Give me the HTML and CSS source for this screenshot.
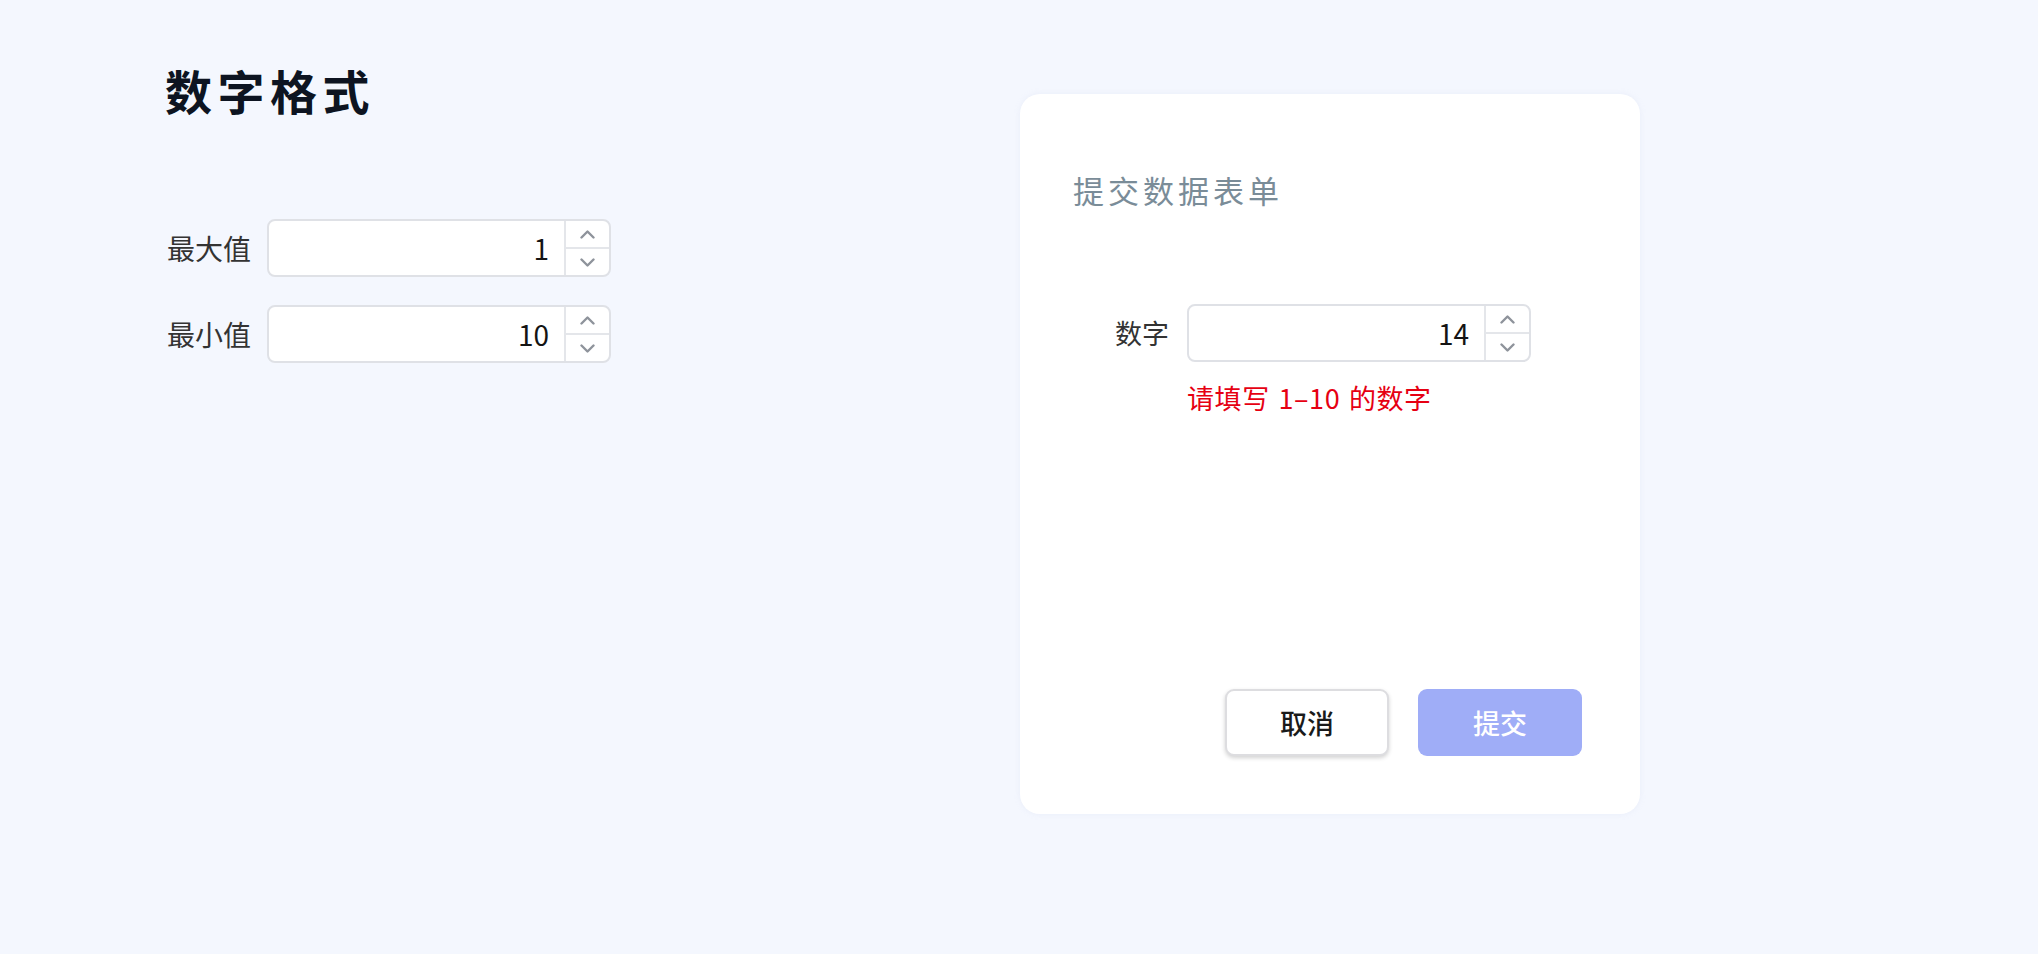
FILE: index.html
```html
<!DOCTYPE html>
<html lang="zh-CN">
<head>
<meta charset="utf-8">
<title>数字格式</title>
<link rel="stylesheet" href="styles.css">
</head>
<body>
<div class="page">
  <section class="left">
    <h1 class="title">数字格式</h1>
    <div class="fields">
      <div class="field">
        <label class="field-label">最大值</label>
        <div class="num-input">
          <span class="num-value">1</span>
          <div class="stepper">
            <span class="step"><svg width="15" height="9" viewBox="0 0 15 9"><path d="M1.5 7.5 L7.5 1.5 L13.5 7.5" fill="none" stroke="#8e939b" stroke-width="2.4" stroke-linecap="round" stroke-linejoin="round"/></svg></span>
            <span class="step"><svg width="15" height="9" viewBox="0 0 15 9"><path d="M1.5 1.5 L7.5 7.5 L13.5 1.5" fill="none" stroke="#8e939b" stroke-width="2.4" stroke-linecap="round" stroke-linejoin="round"/></svg></span>
          </div>
        </div>
      </div>
      <div class="field">
        <label class="field-label">最小值</label>
        <div class="num-input">
          <span class="num-value">10</span>
          <div class="stepper">
            <span class="step"><svg width="15" height="9" viewBox="0 0 15 9"><path d="M1.5 7.5 L7.5 1.5 L13.5 7.5" fill="none" stroke="#8e939b" stroke-width="2.4" stroke-linecap="round" stroke-linejoin="round"/></svg></span>
            <span class="step"><svg width="15" height="9" viewBox="0 0 15 9"><path d="M1.5 1.5 L7.5 7.5 L13.5 1.5" fill="none" stroke="#8e939b" stroke-width="2.4" stroke-linecap="round" stroke-linejoin="round"/></svg></span>
          </div>
        </div>
      </div>
    </div>
  </section>

  <section class="card">
    <h2 class="card-title">提交数据表单</h2>
    <div class="form-row">
      <label class="form-label">数字</label>
      <div class="num-input">
        <span class="num-value">14</span>
        <div class="stepper">
          <span class="step"><svg width="15" height="9" viewBox="0 0 15 9"><path d="M1.5 7.5 L7.5 1.5 L13.5 7.5" fill="none" stroke="#8e939b" stroke-width="2.4" stroke-linecap="round" stroke-linejoin="round"/></svg></span>
          <span class="step"><svg width="15" height="9" viewBox="0 0 15 9"><path d="M1.5 1.5 L7.5 7.5 L13.5 1.5" fill="none" stroke="#8e939b" stroke-width="2.4" stroke-linecap="round" stroke-linejoin="round"/></svg></span>
        </div>
      </div>
    </div>
    <div class="error">请填写 1–10 的数字</div>
    <div class="actions">
      <button class="btn btn-cancel">取消</button>
      <button class="btn btn-submit">提交</button>
    </div>
  </section>
</div>
</body>
</html>
```

FILE: styles.css
```css
* { box-sizing: border-box; }
html, body {
  margin: 0;
  padding: 0;
  background: #f4f7fe;
  font-family: "Noto Sans CJK SC", "Noto Sans", sans-serif;
}
.page {
  display: flex;
  padding-left: 165px;
  min-height: 954px;
}
.left {
  width: 855px;
  padding-top: 59px;
}
.title {
  margin: 0;
  font-size: 47px;
  line-height: 61px;
  font-weight: 700;
  letter-spacing: 5.5px;
  color: #0d1421;
}
.fields {
  margin-top: 99px;
  display: flex;
  flex-direction: column;
  gap: 28px;
}
.field {
  display: flex;
  align-items: center;
  gap: 18px;
}
.field-label {
  width: 84px;
  padding-left: 2px;
  font-size: 28px;
  color: #333;
  line-height: 36px;
  white-space: nowrap;
}
.num-input {
  width: 344px;
  height: 58px;
  border: 2px solid #dfe1e6;
  border-radius: 8px;
  background: #fff;
  display: flex;
}
.num-value {
  flex: 1;
  text-align: right;
  padding-right: 15px;
  font-size: 28px;
  line-height: 54px;
  color: #141414;
}
.stepper {
  width: 45px;
  border-left: 2px solid #e4e6ea;
  display: flex;
  flex-direction: column;
}
.step {
  flex: 1;
  display: flex;
  align-items: center;
  justify-content: center;
}
.step + .step {
  border-top: 2px solid #e4e6ea;
}
.card {
  margin-top: 94px;
  width: 620px;
  height: 720px;
  background: #fff;
  border-radius: 20px;
  box-shadow: 0 0 6px rgba(180, 190, 220, 0.15);
  padding: 76px 58px 58px 53px;
  display: flex;
  flex-direction: column;
}
.card-title {
  margin: 0;
  font-size: 31px;
  line-height: 40px;
  font-weight: 400;
  letter-spacing: 4px;
  color: #7a8c98;
}
.form-row {
  margin-top: 94px;
  display: flex;
  align-items: center;
  gap: 18px;
}
.form-label {
  width: 96px;
  text-align: right;
  font-size: 27px;
  line-height: 36px;
  color: #333;
}
.error {
  margin-top: 18px;
  margin-left: 114px;
  font-size: 27px;
  line-height: 36px;
  letter-spacing: 0.6px;
  word-spacing: 2px;
  color: #e60012;
}
.actions {
  margin-top: auto;
  display: flex;
  justify-content: flex-end;
  gap: 29px;
}
.btn {
  width: 164px;
  height: 67px;
  border-radius: 9px;
  font-family: "Noto Sans CJK SC", "Noto Sans", sans-serif;
  font-size: 27px;
  font-weight: 500;
  cursor: pointer;
}
.btn-cancel {
  background: #fff;
  color: #1a1a1a;
  border: 2px solid #dddde0;
  box-shadow: 0 2px 4px rgba(0, 0, 0, 0.18);
}
.btn-submit {
  background: #9fadf7;
  color: #fff;
  border: none;
}
```
